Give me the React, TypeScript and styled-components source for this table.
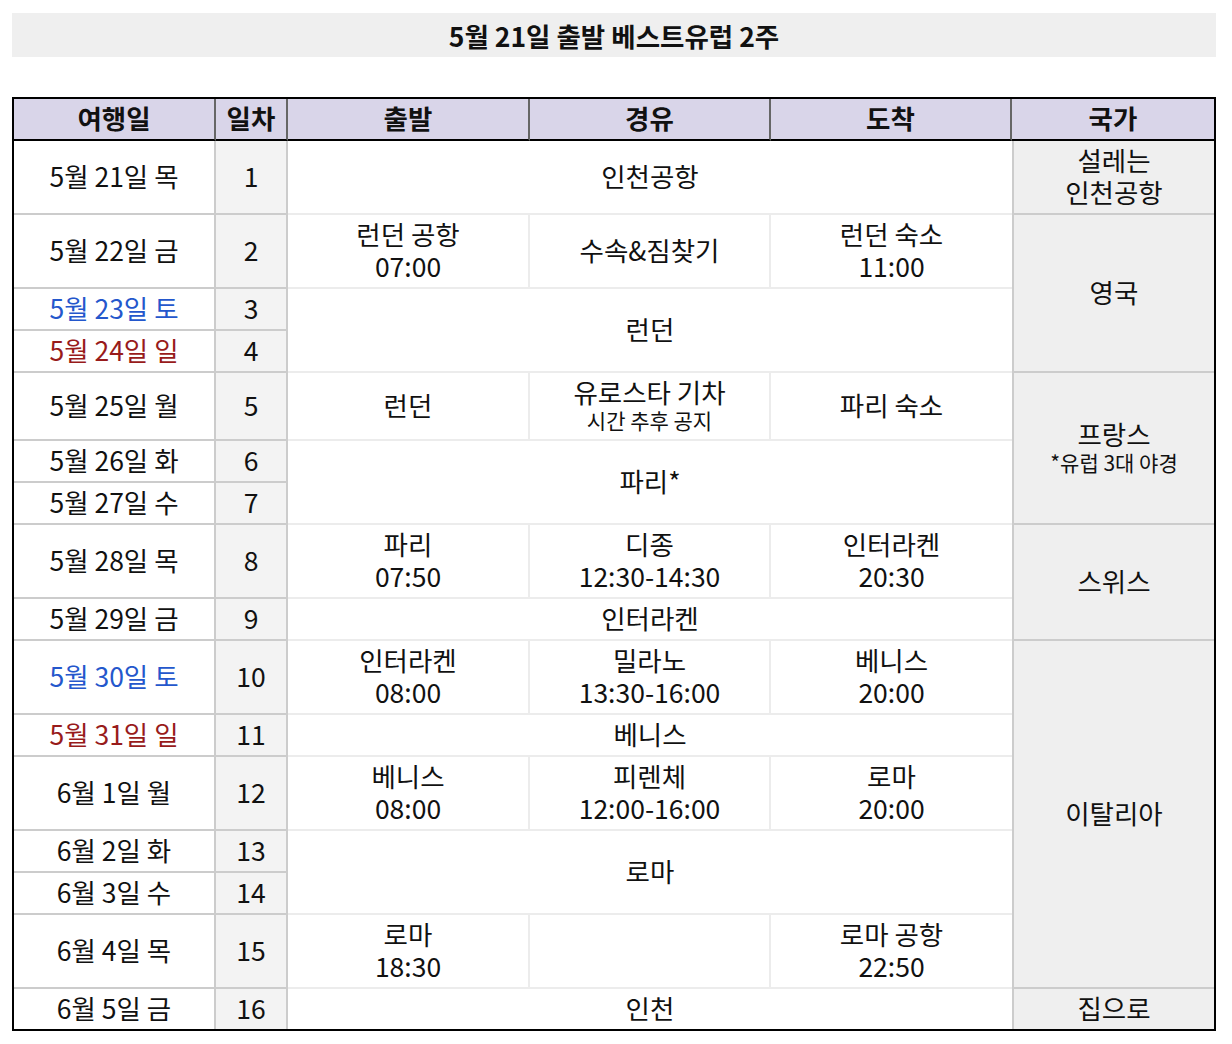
import styled, { createGlobalStyle } from "styled-components";
import { ReactNode } from "react";

const GlobalStyle = createGlobalStyle`
  body {
    margin: 0;
    background: #fff;
    font-family: "Noto Sans CJK KR", "Noto Sans", sans-serif;
    color: #111;
  }
`;

const Page = styled.div`
  padding: 13px 16px 0 12px;
  width: 1204px;
`;

const TitleBar = styled.div`
  height: 44px;
  display: flex;
  align-items: center;
  justify-content: center;
  background: #efefef;
  font-size: 26.5px;
  font-weight: 700;
  margin-bottom: 40px;
`;

const Grid = styled.div`
  display: grid;
  grid-template-columns: 202px 72px 242px 241px 241px 202px;
  grid-template-rows: 42px 74px 74px 42px 42px 68px 42px 42px 74px 42px 74px 42px 74px 42px 42px 74px 40px;
  border: 2px solid #000;
  font-size: 26.5px;
  line-height: 32px;
`;

const BaseCell = styled.div<{ $last?: boolean }>`
  box-sizing: border-box;
  display: flex;
  flex-direction: column;
  align-items: center;
  justify-content: center;
  text-align: center;
  padding-bottom: 2px;
  border-bottom: ${({ $last }) => ($last ? "none" : "2px solid #ccc")};
`;

const HeadCell = styled(BaseCell)<{ $end?: boolean }>`
  background: #d9d5e9;
  font-weight: 700;
  border-bottom: 2px solid #000;
  border-right: ${({ $end }) => ($end ? "none" : "2px solid #666")};
`;

const DateCell = styled(BaseCell)<{ $tone?: "sat" | "sun" }>`
  border-right: 2px solid #ccc;
  color: ${({ $tone }) =>
    $tone === "sat" ? "#2457cc" : $tone === "sun" ? "#981b1b" : "#111"};
`;

const DayCell = styled(BaseCell)`
  background: #f3f3f3;
  border-right: 2px solid #ccc;
`;

const PlaceCell = styled(BaseCell)<{ $span?: number; $rows?: number; $end?: boolean }>`
  grid-column: span ${({ $span }) => $span ?? 1};
  grid-row: span ${({ $rows }) => $rows ?? 1};
  border-bottom: ${({ $last }) => ($last ? "none" : "2px solid #ececec")};
  border-right: ${({ $end }) => ($end ? "none" : "2px solid #ececec")};
`;

const CountryCell = styled(BaseCell)<{ $rows?: number }>`
  grid-row: span ${({ $rows }) => $rows ?? 1};
  background: #efefef;
  border-left: 2px solid #ccc;
`;

const Main = styled.span`
  line-height: 30px;
`;

const Note = styled.span`
  font-size: 21px;
  line-height: 26px;
`;

type Row = {
  date: string;
  day: number;
  tone?: "sat" | "sun";
  places?: ReactNode;
  country?: ReactNode;
};

const Two = ({ a, b }: { a: string; b: string }) => (
  <>
    <span>{a}</span>
    <span>{b}</span>
  </>
);

export default function App() {
  const last = true;
  return (
    <Page>
      <GlobalStyle />
      <TitleBar>5월 21일 출발 베스트유럽 2주</TitleBar>
      <Grid>
        <HeadCell>여행일</HeadCell>
        <HeadCell>일차</HeadCell>
        <HeadCell>출발</HeadCell>
        <HeadCell>경유</HeadCell>
        <HeadCell>도착</HeadCell>
        <HeadCell $end>국가</HeadCell>

        <DateCell>5월 21일 목</DateCell>
        <DayCell>1</DayCell>
        <PlaceCell $span={3} $end>인천공항</PlaceCell>
        <CountryCell>
          <Two a="설레는" b="인천공항" />
        </CountryCell>

        <DateCell>5월 22일 금</DateCell>
        <DayCell>2</DayCell>
        <PlaceCell>
          <Two a="런던 공항" b="07:00" />
        </PlaceCell>
        <PlaceCell>수속&amp;짐찾기</PlaceCell>
        <PlaceCell $end>
          <Two a="런던 숙소" b="11:00" />
        </PlaceCell>
        <CountryCell $rows={3}>영국</CountryCell>

        <DateCell $tone="sat">5월 23일 토</DateCell>
        <DayCell>3</DayCell>
        <PlaceCell $span={3} $rows={2} $end>런던</PlaceCell>

        <DateCell $tone="sun">5월 24일 일</DateCell>
        <DayCell>4</DayCell>

        <DateCell>5월 25일 월</DateCell>
        <DayCell>5</DayCell>
        <PlaceCell>런던</PlaceCell>
        <PlaceCell>
          <Main>유로스타 기차</Main>
          <Note>시간 추후 공지</Note>
        </PlaceCell>
        <PlaceCell $end>파리 숙소</PlaceCell>
        <CountryCell $rows={3}>
          <Main>프랑스</Main>
          <Note>*유럽 3대 야경</Note>
        </CountryCell>

        <DateCell>5월 26일 화</DateCell>
        <DayCell>6</DayCell>
        <PlaceCell $span={3} $rows={2} $end>파리*</PlaceCell>

        <DateCell>5월 27일 수</DateCell>
        <DayCell>7</DayCell>

        <DateCell>5월 28일 목</DateCell>
        <DayCell>8</DayCell>
        <PlaceCell>
          <Two a="파리" b="07:50" />
        </PlaceCell>
        <PlaceCell>
          <Two a="디종" b="12:30-14:30" />
        </PlaceCell>
        <PlaceCell $end>
          <Two a="인터라켄" b="20:30" />
        </PlaceCell>
        <CountryCell $rows={2}>스위스</CountryCell>

        <DateCell>5월 29일 금</DateCell>
        <DayCell>9</DayCell>
        <PlaceCell $span={3} $end>인터라켄</PlaceCell>

        <DateCell $tone="sat">5월 30일 토</DateCell>
        <DayCell>10</DayCell>
        <PlaceCell>
          <Two a="인터라켄" b="08:00" />
        </PlaceCell>
        <PlaceCell>
          <Two a="밀라노" b="13:30-16:00" />
        </PlaceCell>
        <PlaceCell $end>
          <Two a="베니스" b="20:00" />
        </PlaceCell>
        <CountryCell $rows={6}>이탈리아</CountryCell>

        <DateCell $tone="sun">5월 31일 일</DateCell>
        <DayCell>11</DayCell>
        <PlaceCell $span={3} $end>베니스</PlaceCell>

        <DateCell>6월 1일 월</DateCell>
        <DayCell>12</DayCell>
        <PlaceCell>
          <Two a="베니스" b="08:00" />
        </PlaceCell>
        <PlaceCell>
          <Two a="피렌체" b="12:00-16:00" />
        </PlaceCell>
        <PlaceCell $end>
          <Two a="로마" b="20:00" />
        </PlaceCell>

        <DateCell>6월 2일 화</DateCell>
        <DayCell>13</DayCell>
        <PlaceCell $span={3} $rows={2} $end>로마</PlaceCell>

        <DateCell>6월 3일 수</DateCell>
        <DayCell>14</DayCell>

        <DateCell>6월 4일 목</DateCell>
        <DayCell>15</DayCell>
        <PlaceCell>
          <Two a="로마" b="18:30" />
        </PlaceCell>
        <PlaceCell />
        <PlaceCell $end>
          <Two a="로마 공항" b="22:50" />
        </PlaceCell>

        <DateCell $last={last}>6월 5일 금</DateCell>
        <DayCell $last={last}>16</DayCell>
        <PlaceCell $span={3} $end $last={last}>
          인천
        </PlaceCell>
        <CountryCell $last={last}>집으로</CountryCell>
      </Grid>
    </Page>
  );
}
